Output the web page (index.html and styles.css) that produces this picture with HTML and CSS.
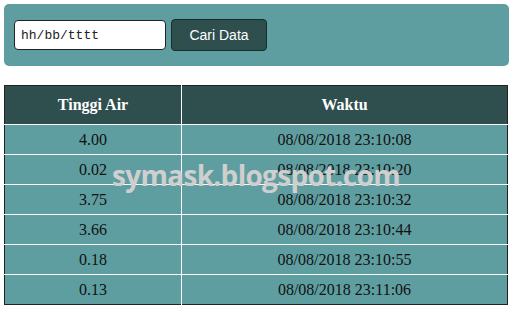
FILE: index.html
```html
<!DOCTYPE html>
<html lang="id">
<head>
  <meta charset="UTF-8" />
  <title>Data Tinggi Air</title>
  <link rel="stylesheet" href="styles.css">
</head>
<body>
  <form class="search-box">
    <input type="text" class="date-input" value="hh/bb/tttt" />
    <button type="button" class="search-btn">Cari Data</button>
  </form>

  <div class="table-wrap">
    <table class="data-table">
      <thead>
        <tr><th class="col-level">Tinggi Air</th><th>Waktu</th></tr>
      </thead>
      <tbody>
        <tr><td>4.00</td><td>08/08/2018 23:10:08</td></tr>
        <tr><td>0.02</td><td>08/08/2018 23:10:20</td></tr>
        <tr><td>3.75</td><td>08/08/2018 23:10:32</td></tr>
        <tr><td>3.66</td><td>08/08/2018 23:10:44</td></tr>
        <tr><td>0.18</td><td>08/08/2018 23:10:55</td></tr>
        <tr><td>0.13</td><td>08/08/2018 23:11:06</td></tr>
      </tbody>
    </table>
    <div class="watermark">symask.blogspot.com</div>
  </div>
</body>
</html>
```

FILE: styles.css
```css
body { margin: 4px; font-family: 'Liberation Serif', serif; font-size: 16px; color: #111; background: #fff; }
.search-box { display: flex; align-items: center; gap: 5px; background: #5f9ea0; border-radius: 5px; padding: 15px 9px 15px 9px; margin: 0 0 19px 0; height: 32px; }
.date-input { width: 152px; height: 30px; box-sizing: border-box; margin: 0 0 0 1px; padding: 0 6px; border: 1px solid #222; border-radius: 4px; background: #fff; font-family: 'Liberation Mono', monospace; font-size: 13px; color: #222; }
.search-btn { width: 96px; height: 32px; box-sizing: border-box; border: 1px solid #1a2b2b; border-radius: 4px; background: #2f4f4f; color: #fff; font-family: 'Liberation Sans', Arial, sans-serif; font-size: 14px; cursor: pointer; }
.table-wrap { position: relative; width: 504px; }
.data-table { width: 504px; border-collapse: collapse; border: 1px solid #222; background: #5f9ea0; }
.data-table th, .data-table td { border: 1px solid #fff; text-align: center; padding: 0; }
.data-table th { height: 38px; background: #2f4f4f; color: #fff; font-weight: bold; }
.data-table td { height: 29px; }
.data-table th:first-child, .data-table td:first-child { border-left: none; }
.data-table th:last-child, .data-table td:last-child { border-right: none; }
.data-table thead tr th { border-top: none; }
.data-table tbody tr:last-child td { border-bottom: none; }
.col-level { width: 176px; }
.watermark { position: absolute; left: 108px; top: 71px; font-family: 'Open Sans', 'DejaVu Sans', sans-serif; font-weight: bold; font-size: 28px; letter-spacing: -0.7px; color: #cfcfcf; pointer-events: none; }
```
